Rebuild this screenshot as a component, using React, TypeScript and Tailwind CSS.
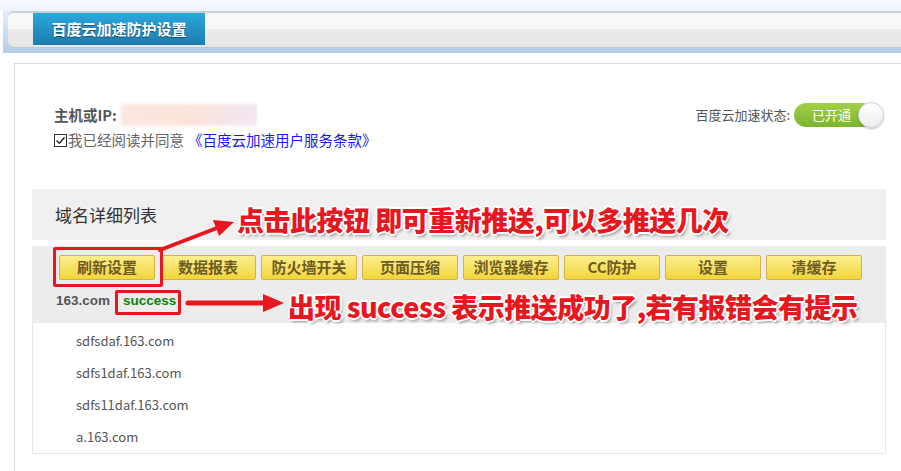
import React from 'react';

const buttons = ['刷新设置', '数据报表', '防火墙开关', '页面压缩', '浏览器缓存', 'CC防护', '设置', '清缓存'];
const domains = ['sdfsdaf.163.com', 'sdfs1daf.163.com', 'sdfs11daf.163.com', 'a.163.com'];

const noteText =
  "absolute whitespace-nowrap text-[27px] tracking-[-0.5px] leading-none font-black text-[#e8161f] [text-shadow:-1px_-1px_0_#fff,1px_-1px_0_#fff,-1px_1px_0_#fff,1px_1px_0_#fff,0_2px_0_#fff,2px_0_0_#fff,-2px_0_0_#fff,0_-2px_0_#fff,2px_3px_3px_rgba(0,0,0,0.35)]";

const App: React.FC = () => {
  return (
    <div className="relative w-[901px] h-[471px] overflow-hidden bg-white font-['Noto_Sans_CJK_SC',sans-serif]">
      {/* top strip + tab bar */}
      <div className="h-[11px] bg-gradient-to-b from-[#f7fbff] to-[#edf4fc]"></div>
      <div className="ml-[3px] h-[42px] bg-gradient-to-b from-[#e3eef9] to-[#b3cee8] pl-[5px] pb-[5px]">
        <div className="h-[37px] rounded-l-[6px] border-t-2 border-b border-t-[#c9ced6] border-b-[#c2c7ce] bg-[linear-gradient(to_bottom,#fafafa_0%,#f6f6f6_47%,#ebebeb_47%,#e6e6e6_100%)] pl-[25px]">
          <div className="w-[172px] h-[32px] flex items-center justify-center bg-gradient-to-b from-[#2ca8dd] via-[#2591c6] to-[#1e7cad] text-white text-[15px] font-bold [text-shadow:0_1px_1px_rgba(0,0,0,0.45)]">
            百度云加速防护设置
          </div>
        </div>
      </div>

      {/* panel */}
      <div className="mt-[10px] ml-[14px] h-[420px] border-l border-t border-[#d9d9d9] pl-[17px]">
        <div className="w-[854px] pt-[38px] flex justify-between">
          <div className="pl-[22px]">
            <div className="h-[26px] flex items-center">
              <span className="text-[14.5px] font-bold text-[#555]">主机或IP:</span>
              <span className="ml-[4px] w-[136px] h-[22px] bg-gradient-to-r from-[#fbe6e2] via-[#fbe4da] to-[#f2e6f2] blur-[1.5px]"></span>
            </div>
            <div className="mt-[2px] h-[20px] flex items-center text-[14.5px]">
              <span className="w-[13px] h-[13px] border border-[#333] bg-white flex items-center justify-center">
                <svg width="11" height="11" viewBox="0 0 11 11">
                  <path d="M1.5 5.5 L4.3 8.3 L9.5 2.5" fill="none" stroke="#222" strokeWidth="1.4" />
                </svg>
              </span>
              <span className="ml-[1px] text-[#666]">我已经阅读并同意</span>
              <span className="ml-[4px] text-[#1818ee]">《百度云加速用户服务条款》</span>
            </div>
          </div>
          <div className="h-[26px] flex items-center pr-[2px]">
            <span className="text-[13px] text-[#555] mr-[4px]">百度云加速状态:</span>
            <div className="relative w-[90px] h-[26px]">
              <div className="absolute left-0 top-[1px] w-[80px] h-[24px] rounded-full bg-gradient-to-b from-[#a2d048] to-[#7ab52e] flex items-center pl-[18px] text-[13px] text-white">
                已开通
              </div>
              <div className="absolute right-0 top-0 w-[26px] h-[26px] rounded-full bg-gradient-to-b from-white to-[#eeeeee] border border-[#cfcfcf] shadow-[0_1px_2px_rgba(0,0,0,0.25)]"></div>
            </div>
          </div>
        </div>

        <div className="mt-[39px] w-[854px] h-[51px] bg-[#f0f0f0] flex items-center pl-[23px] text-[17px] text-[#333]">
          域名详细列表
        </div>

        <div className="mt-[6px] w-[854px] h-[77px] bg-[#ececec]">
          <div className="pt-[9px] pl-[27px] flex gap-[5px]">
            {buttons.map((b) => (
              <div
                key={b}
                className="w-[96px] h-[25px] rounded-[2px] border border-[#d3b04a] bg-gradient-to-b from-[#fcef8c] to-[#f2d535] flex items-center justify-center text-[15px] font-bold text-[#6e5c22]"
              >
                {b}
              </div>
            ))}
          </div>
          <div className="mt-[10px] h-[23px] pl-[24px] flex items-center font-['Liberation_Sans',sans-serif] text-[13.5px] font-bold">
            <span className="text-[#555]">163.com</span>
            <span className="ml-[13px] text-[#0a840a]">success</span>
          </div>
        </div>

        <div className="w-[854px] border-x border-b border-[#e6e6e6] pt-[2px] pl-[43px]">
          {domains.map((d) => (
            <div key={d} className="h-[32px] flex items-center text-[13px] text-[#555]">
              {d}
            </div>
          ))}
        </div>
      </div>

      {/* annotations */}
      <div className="absolute left-[53px] top-[247px] w-[110px] h-[40px] border-[3px] border-[#e8161f] rounded-[2px]"></div>
      <div className="absolute left-[115px] top-[290px] w-[66px] h-[25px] border-[3px] border-[#e8161f] rounded-[2px]"></div>
      <svg className="absolute left-0 top-0 pointer-events-none" width="901" height="471">
        <line x1="160" y1="250" x2="217" y2="228" stroke="#e8161f" strokeWidth="4" strokeLinecap="round" />
        <polygon points="234,222 219,236 213,220" fill="#e8161f" />
        <line x1="188" y1="303" x2="266" y2="303" stroke="#e8161f" strokeWidth="5" strokeLinecap="round" />
        <polygon points="284,303 263,294 263,312" fill="#e8161f" />
      </svg>
      <div className={`${noteText} left-[237px] top-[206px]`}>点击此按钮 即可重新推送,可以多推送几次</div>
      <div className={`${noteText} left-[288px] top-[293px]`}>出现 success 表示推送成功了,若有报错会有提示</div>
    </div>
  );
};

export default App;
